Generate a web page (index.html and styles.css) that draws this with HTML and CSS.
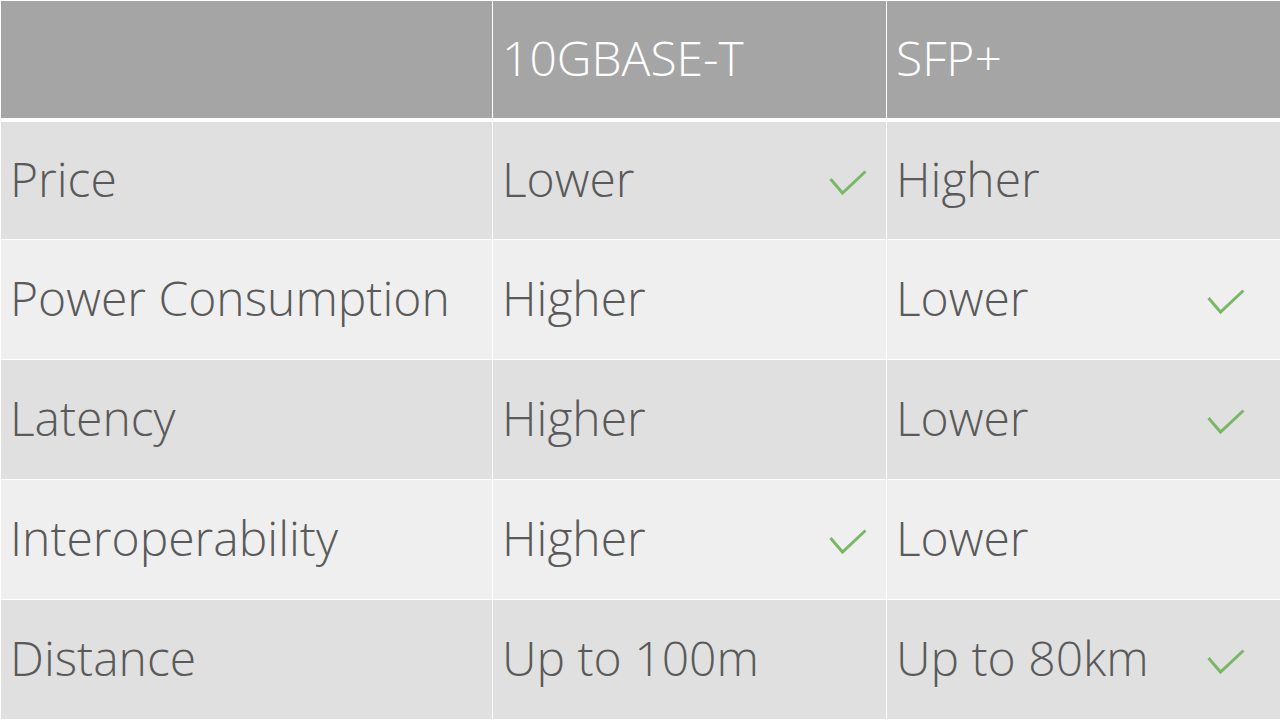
FILE: index.html
```html
<!DOCTYPE html>
<html lang="en">
<head>
<meta charset="utf-8">
<title>10GBASE-T vs SFP+</title>
<link rel="stylesheet" href="styles.css">
</head>
<body>
<div class="table">
  <div class="row head">
    <div class="cell"></div>
    <div class="cell">10GBASE-T</div>
    <div class="cell">SFP+</div>
  </div>
  <div class="row odd first">
    <div class="cell">Price</div>
    <div class="cell c2"><span>Lower</span><svg class="check" viewBox="0 0 38 26"><polyline points="1.5,9 13.5,23 36.5,1.5"/></svg></div>
    <div class="cell c3"><span>Higher</span></div>
  </div>
  <div class="row even">
    <div class="cell">Power Consumption</div>
    <div class="cell c2"><span>Higher</span></div>
    <div class="cell c3"><span>Lower</span><svg class="check" viewBox="0 0 38 26"><polyline points="1.5,9 13.5,23 36.5,1.5"/></svg></div>
  </div>
  <div class="row odd">
    <div class="cell">Latency</div>
    <div class="cell c2"><span>Higher</span></div>
    <div class="cell c3"><span>Lower</span><svg class="check" viewBox="0 0 38 26"><polyline points="1.5,9 13.5,23 36.5,1.5"/></svg></div>
  </div>
  <div class="row even">
    <div class="cell">Interoperability</div>
    <div class="cell c2"><span>Higher</span><svg class="check" viewBox="0 0 38 26"><polyline points="1.5,9 13.5,23 36.5,1.5"/></svg></div>
    <div class="cell c3"><span>Lower</span></div>
  </div>
  <div class="row odd">
    <div class="cell">Distance</div>
    <div class="cell c2"><span>Up to 100m</span></div>
    <div class="cell c3"><span>Up to 80km</span><svg class="check" viewBox="0 0 38 26"><polyline points="1.5,9 13.5,23 36.5,1.5"/></svg></div>
  </div>
</div>
</body>
</html>
```
FILE: styles.css
```css
html, body {
  margin: 0;
  padding: 0;
  background: #ffffff;
}
body {
  width: 1280px;
  height: 720px;
  overflow: hidden;
  font-family: "Open Sans", "Liberation Sans", sans-serif;
  font-weight: 300;
}
.table {
  display: flex;
  flex-direction: column;
  gap: 1px;
  padding: 1px 0 0 1px;
}
.row {
  display: grid;
  grid-template-columns: 491px 393px 393px;
  column-gap: 1px;
  height: 119px;
}
.row.head {
  height: 117px;
  margin-bottom: 3px;
}
.row.first {
  height: 117px;
}
.cell {
  display: flex;
  align-items: center;
  justify-content: space-between;
  padding: 0 0 4px 9px;
  font-size: 48px;
  color: #5a5a5a;
  white-space: nowrap;
}
.head .cell {
  background: #a5a5a5;
  color: #ffffff;
  padding-left: 9px;
}
.odd .cell {
  background: #e0e0e0;
}
.even .cell {
  background: #efefef;
}
.cell.c2 {
  padding-right: 19px;
}
.cell.c3 {
  padding-right: 35px;
}
.check {
  width: 38px;
  height: 26px;
  margin-top: 8px;
  fill: none;
  stroke: #79b865;
  stroke-width: 3;
  stroke-linejoin: miter;
}
```
